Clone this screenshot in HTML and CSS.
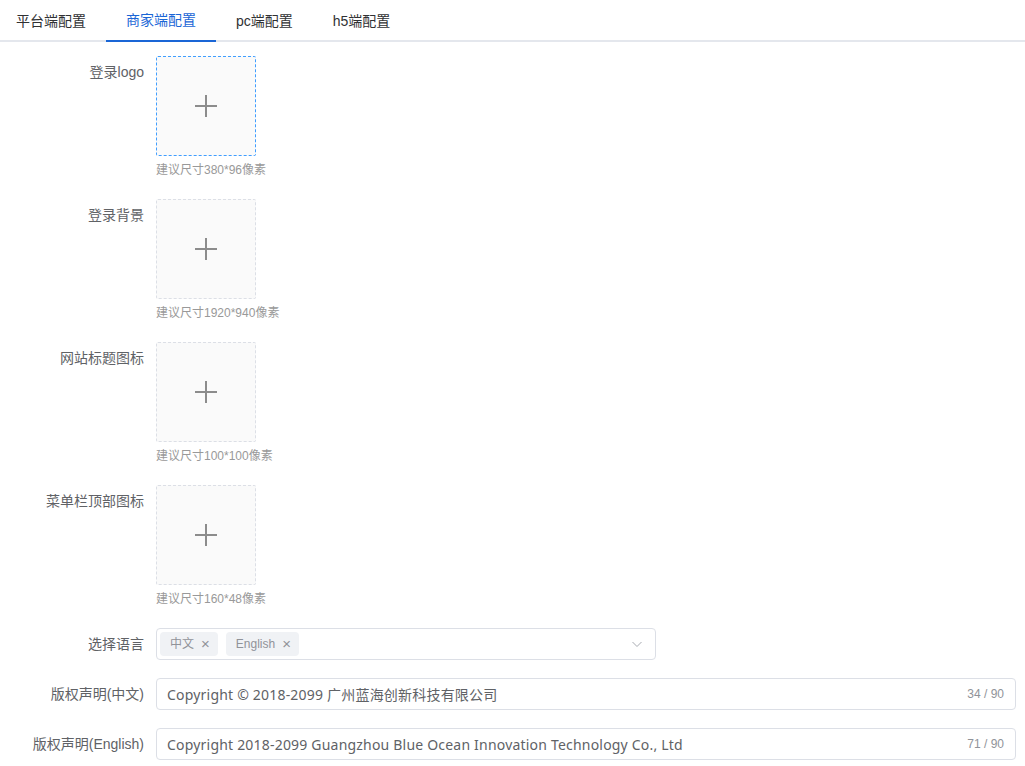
FILE: index.html
```html
<!DOCTYPE html>
<html lang="zh-CN">
    <head>
        <meta charset="UTF-8">
        <meta name="viewport" content="width=device-width, initial-scale=1.0">
        <title>商家端配置</title>
        <link rel="stylesheet" href="styles.css">
    </head>
    <body>
        <div class="tabs">
            <div class="tab">平台端配置</div>
            <div class="tab active">商家端配置</div>
            <div class="tab">pc端配置</div>
            <div class="tab">h5端配置</div>
        </div>

        <form class="form">
            <div class="form-item">
                <label class="form-label">登录logo</label>
                <div class="form-content">
                    <div class="upload hover">
                        <svg class="plus" width="24" height="24" viewBox="0 0 24 24"><path d="M12 1v22M1 12h22" stroke="#8c8c8c" stroke-width="2" fill="none"/></svg>
                    </div>
                    <div class="tip">建议尺寸380*96像素</div>
                </div>
            </div>
            <div class="form-item">
                <label class="form-label">登录背景</label>
                <div class="form-content">
                    <div class="upload">
                        <svg class="plus" width="24" height="24" viewBox="0 0 24 24"><path d="M12 1v22M1 12h22" stroke="#8c8c8c" stroke-width="2" fill="none"/></svg>
                    </div>
                    <div class="tip">建议尺寸1920*940像素</div>
                </div>
            </div>
            <div class="form-item">
                <label class="form-label">网站标题图标</label>
                <div class="form-content">
                    <div class="upload">
                        <svg class="plus" width="24" height="24" viewBox="0 0 24 24"><path d="M12 1v22M1 12h22" stroke="#8c8c8c" stroke-width="2" fill="none"/></svg>
                    </div>
                    <div class="tip">建议尺寸100*100像素</div>
                </div>
            </div>
            <div class="form-item">
                <label class="form-label">菜单栏顶部图标</label>
                <div class="form-content">
                    <div class="upload">
                        <svg class="plus" width="24" height="24" viewBox="0 0 24 24"><path d="M12 1v22M1 12h22" stroke="#8c8c8c" stroke-width="2" fill="none"/></svg>
                    </div>
                    <div class="tip">建议尺寸160*48像素</div>
                </div>
            </div>

            <div class="form-item">
                <label class="form-label">选择语言</label>
                <div class="form-content">
                    <div class="select">
                        <span class="tag">中文<span class="tag-close">×</span></span>
                        <span class="tag">English<span class="tag-close">×</span></span>
                        <svg class="arrow" width="12" height="12" viewBox="0 0 12 12"><path d="M1.5 4l4.5 4.5L10.5 4" stroke="#a8abb2" stroke-width="1" fill="none"/></svg>
                    </div>
                </div>
            </div>

            <div class="form-item">
                <label class="form-label">版权声明(中文)</label>
                <div class="form-content">
                    <div class="input">
                        <span class="input-text">Copyright © 2018-2099 广州蓝海创新科技有限公司</span>
                        <span class="count">34 / 90</span>
                    </div>
                </div>
            </div>
            <div class="form-item">
                <label class="form-label">版权声明(English)</label>
                <div class="form-content">
                    <div class="input">
                        <span class="input-text">Copyright 2018-2099 Guangzhou Blue Ocean Innovation Technology Co., Ltd</span>
                        <span class="count">71 / 90</span>
                    </div>
                </div>
            </div>
        </form>
    </body>
</html>
```

FILE: styles.css
```css
body {
    margin: 0;
    background-color: #fff;
    font-family: "Liberation Sans", "Noto Sans CJK SC", sans-serif;
    font-size: 14px;
    color: #303133;
}
.tabs {
    display: flex;
    height: 40px;
    border-bottom: 2px solid #e4e7ed;
}
.tab {
    padding: 0 20px;
    line-height: 42px;
    height: 40px;
    color: #303133;
    box-sizing: border-box;
}
.tab:first-child {
    padding-left: 16px;
}
.tab.active {
    color: #1a66d6;
    border-bottom: 2px solid #1a66d6;
    height: 42px;
    line-height: 40px;
    margin-bottom: -2px;
}
.form {
    padding-top: 14px;
}
.form-item {
    display: flex;
    margin-bottom: 18px;
}
.form-label {
    width: 156px;
    padding-right: 12px;
    box-sizing: border-box;
    text-align: right;
    line-height: 32px;
    color: #606266;
    flex-shrink: 0;
}
.form-content {
    flex: 1;
    padding-right: 9px;
}
.upload {
    width: 100px;
    height: 100px;
    box-sizing: border-box;
    border: 1px dashed #dcdfe6;
    border-radius: 2px;
    background-color: #fafafa;
    display: flex;
    align-items: center;
    justify-content: center;
}
.upload.hover {
    border-color: #409eff;
}
.tip {
    font-size: 12px;
    color: #999;
    line-height: 20px;
    margin-top: 4px;
    margin-bottom: 1px;
}
.select {
    width: 500px;
    height: 32px;
    box-sizing: border-box;
    border: 1px solid #dcdfe6;
    border-radius: 4px;
    display: flex;
    align-items: center;
    padding: 0 12px 0 3px;
    gap: 8px;
}
.tag {
    height: 24px;
    line-height: 24px;
    padding: 0 8px 0 10px;
    background-color: #f0f2f5;
    color: #909399;
    font-size: 12px;
    border-radius: 4px;
    display: flex;
    align-items: center;
}
.tag-close {
    margin-left: 7px;
    font-size: 15px;
    font-weight: 300;
}
.arrow {
    margin-left: auto;
}
.input {
    height: 32px;
    box-sizing: border-box;
    border: 1px solid #dcdfe6;
    border-radius: 4px;
    display: flex;
    align-items: center;
    padding: 0 11px 0 10px;
}
.input-text {
    flex: 1;
    color: #606266;
    font-family: "Noto Sans", "Noto Sans CJK SC", sans-serif;
    letter-spacing: 0.2px;
}
.count {
    font-size: 12px;
    color: #909399;
}
```
